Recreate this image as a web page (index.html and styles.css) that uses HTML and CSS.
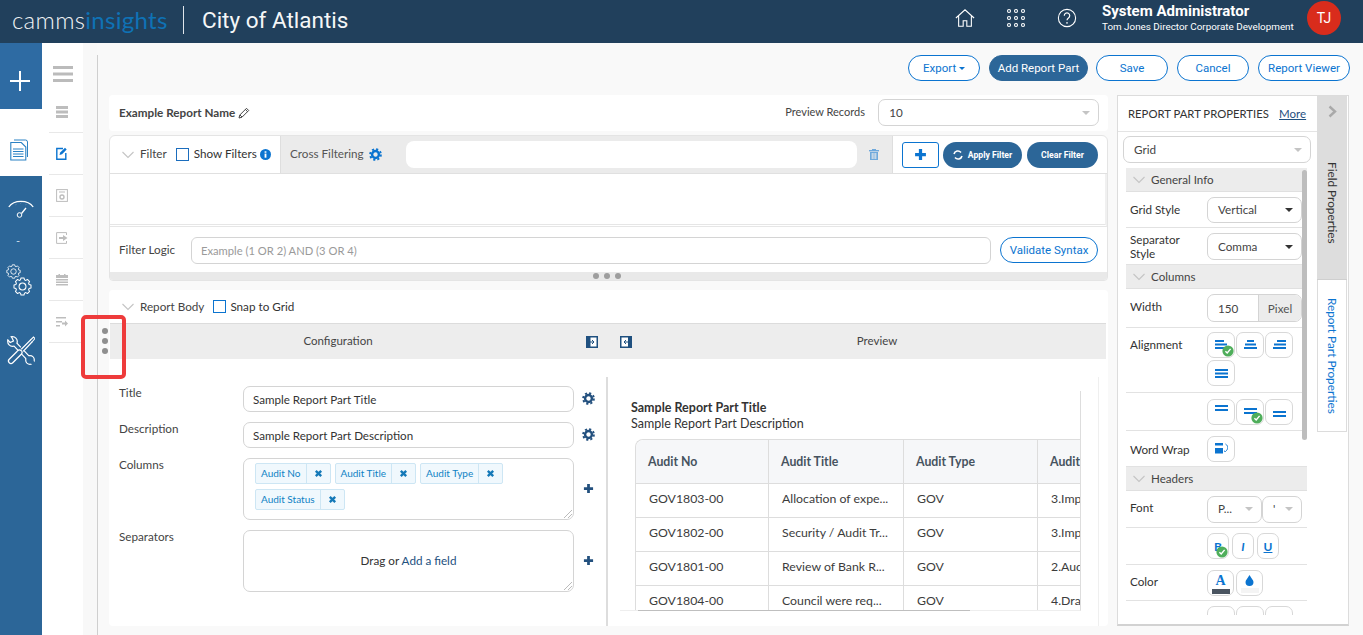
FILE: index.html
```html
<!DOCTYPE html>
<html lang="en">
<head>
<meta charset="utf-8">
<title>City of Atlantis</title>
<link rel="stylesheet" href="styles.css">
</head>
<body>
<svg class="defs" width="0" height="0" aria-hidden="true">
  <symbol id="gear" viewBox="0 0 16 16">
    <circle cx="8" cy="8" r="4.2" fill="none" stroke="currentColor" stroke-width="3"/>
    <circle cx="8" cy="8" r="6.6" fill="none" stroke="currentColor" stroke-width="2.4" stroke-dasharray="2.6 2.58"/>
  </symbol>
  <symbol id="cog-line" viewBox="-11 -11 22 22">
    <polygon points="7.65,-2.34 9.85,-1.74 9.85,1.74 7.65,2.34 7.06,3.76 8.19,5.74 5.74,8.19 3.76,7.06 2.34,7.65 1.74,9.85 -1.74,9.85 -2.34,7.65 -3.76,7.06 -5.74,8.19 -8.19,5.74 -7.06,3.76 -7.65,2.34 -9.85,1.74 -9.85,-1.74 -7.65,-2.34 -7.06,-3.76 -8.19,-5.74 -5.74,-8.19 -3.76,-7.06 -2.34,-7.65 -1.74,-9.85 1.74,-9.85 2.34,-7.65 3.76,-7.06 5.74,-8.19 8.19,-5.74 7.06,-3.76" fill="none" stroke="#fff" stroke-width="1.2" stroke-linejoin="round"/>
    <circle r="4" fill="none" stroke="#fff" stroke-width="1.2"/>
  </symbol>
  <symbol id="chev" viewBox="0 0 12 8">
    <path d="M.5 1 6 6.5 11.5 1" fill="none" stroke="#c4c4c4" stroke-width="1.1"/>
  </symbol>
  <symbol id="plus" viewBox="0 0 12 12">
    <path d="M6 1v10M1 6h10" fill="none" stroke="currentColor" stroke-width="3"/>
  </symbol>
  <symbol id="x" viewBox="0 0 10 10">
    <path d="M2 2l6 6M8 2l-6 6" fill="none" stroke="currentColor" stroke-width="2.6"/>
  </symbol>
  <symbol id="check" viewBox="0 0 12 12">
    <circle cx="6" cy="6" r="5.6" fill="#4fae5b"/>
    <path d="M3.4 6.2 5.2 8 8.6 3.9" fill="none" stroke="#fff" stroke-width="1.4"/>
  </symbol>
  <symbol id="bars3" viewBox="0 0 13 9" >
    <rect width="13" height="2"/><rect y="3.5" width="13" height="2"/><rect y="7" width="13" height="2"/>
  </symbol>
  <symbol id="bars2" viewBox="0 0 13 6">
    <rect width="13" height="2"/><rect y="4" width="13" height="2"/>
  </symbol>
</svg>

<header class="topbar">
  <div class="brand"><span class="brand-a">camms</span><span class="brand-b">insights</span></div>
  <div class="client">City of Atlantis</div>
  <nav class="top-icons">
    <svg class="ti" viewBox="0 0 22 22"><path d="M1 11 11 2l10 9M4 9v11h5v-6h4v6h5V9" fill="none" stroke="#fff" stroke-width="1.2"/></svg>
    <svg class="ti" viewBox="0 0 20 20" fill="none" stroke="#fff" stroke-width="1.1"><circle cx="3" cy="3" r="1.5"/><circle cx="10" cy="3" r="1.5"/><circle cx="17" cy="3" r="1.5"/><circle cx="3" cy="10" r="1.5"/><circle cx="10" cy="10" r="1.5"/><circle cx="17" cy="10" r="1.5"/><circle cx="3" cy="17" r="1.5"/><circle cx="10" cy="17" r="1.5"/><circle cx="17" cy="17" r="1.5"/></svg>
    <svg class="ti" viewBox="0 0 22 22"><circle cx="11" cy="11" r="9.5" fill="none" stroke="#fff" stroke-width="1.2"/><path d="M8 8.5a3 3 0 1 1 4.6 2.5c-1 .7-1.6 1.2-1.6 2.6" fill="none" stroke="#fff" stroke-width="1.3"/><circle cx="11" cy="16.4" r=".9" fill="#fff"/></svg>
  </nav>
  <div class="user">
    <div class="user-name">System Administrator</div>
    <div class="user-role">Tom Jones Director Corporate Development</div>
  </div>
  <div class="avatar">TJ</div>
</header>

<div class="shell">
  <aside class="rail">
    <div class="rail-add"><svg width="20" height="20" viewBox="0 0 20 20"><path d="M10 0v20M0 10h20" stroke="#fff" stroke-width="2"/></svg></div>
    <div class="rail-doc">
      <svg width="18" height="22" viewBox="0 0 18 22" fill="none" stroke="#2b82c4"><path d="M4 1h11.5a2 2 0 0 1 2 2v15" stroke-width="1"/><path d="M.8 3.5h10.5l4.5 4.5v13H.8z" fill="#fff" stroke-width="1.1"/><path d="M3 10h10.5M3 12.5h10.5M3 15h10.5M3 17.5h10.5" stroke-width="1.2"/></svg>
    </div>
    <div class="rail-rest">
      <svg class="rg1" width="26" height="20" viewBox="0 0 26 20" fill="none" stroke="#fff"><path d="M.8 9C6 1.500 20 1.500 25.200 9" stroke-width="1.300"/><path d="M18 10 13.500 15.500" stroke-width="1.300"/><circle cx="11.500" cy="17" r="2.300" stroke-width="1"/><path d="M8 6.500l.1.1M13 5l.1.1M18 6.500l.1.1" stroke-width="1.500"/></svg>
      <span class="rail-dash">-</span>
      <div class="rg2">
        <svg class="cog-a" width="15" height="15"><use href="#cog-line"/></svg>
        <svg class="cog-b" width="19" height="19"><use href="#cog-line"/></svg>
      </div>
      <svg class="rg3" width="28" height="29" viewBox="0 0 28 29" fill="none" stroke-linecap="round">
        <path d="M6 6 23 24" stroke="#fff" stroke-width="5.400"/>
        <circle cx="5.500" cy="5.500" r="4.800" fill="#2c6698" stroke="#fff" stroke-width="1.200"/>
        <circle cx="23" cy="24" r="4.300" fill="#2c6698" stroke="#fff" stroke-width="1.200"/>
        <path d="M6 6 23 24" stroke="#2c6698" stroke-width="3"/>
        <path d="M5 5 1.500 1.500" stroke="#2c6698" stroke-width="3.600" stroke-linecap="butt"/>
        <path d="M4.500 .8 6.500 5 3.200 6.500 .8 4" stroke="#fff" stroke-width="1.200"/>
        <path d="M23.500 24.500 27.500 28.500" stroke="#2c6698" stroke-width="3.400" stroke-linecap="butt"/>
        <path d="M15 13.500 24 4.500" stroke="#2c6698" stroke-width="4.600" stroke-linecap="butt"/>
        <path d="M14.500 13 23.500 4M16.500 15 25 6" stroke="#fff" stroke-width="1.100"/>
        <path d="M23.500 4 26.500 1 28 2.500 25 6" stroke="#fff" stroke-width="1.100"/>
        <path d="M4 25 12.500 16.500" stroke="#fff" stroke-width="6.200"/>
        <path d="M4 25 12.500 16.500" stroke="#2c6698" stroke-width="3.800"/>
      </svg>
    </div>
  </aside>

  <aside class="tools">
    <div class="tool tool-menu"><svg width="20" height="16" viewBox="0 0 20 16" fill="#bbb"><rect width="20" height="3"/><rect width="20" height="3" y="6.500"/><rect width="20" height="3" y="13"/></svg></div>
    <div class="tool"><svg width="12" height="12" viewBox="0 0 12 12" fill="#bdbdbd"><rect width="12" height="3"/><rect width="12" height="3" y="4.500"/><rect width="12" height="3" y="9"/></svg></div>
    <div class="tool"><svg width="11" height="13" viewBox="0 0 11 13" fill="none"><path d="M7 1.500H.8v10.700h9V6" stroke="#0b74d0" stroke-width="1.400"/><path d="M3.500 8 4.200 5.500 9 .8l1.700 1.700L6 7.300z" fill="#0b74d0"/></svg></div>
    <div class="tool"><svg width="12" height="13" viewBox="0 0 12 13" fill="none" stroke="#bdbdbd"><rect x=".6" y=".6" width="10.800" height="11.800"/><path d="M3 3h6"/><circle cx="6" cy="8" r="2" stroke-width="1.400"/></svg></div>
    <div class="tool"><svg width="12" height="12" viewBox="0 0 12 12" fill="none" stroke="#bdbdbd"><path d="M10.500 3V.6H.6v10.800h9.900V9"/><path d="M3 6h4" stroke-width="2"/><path d="M7 3l4.500 3L7 9z" fill="#bdbdbd" stroke="none"/></svg></div>
    <div class="tool"><svg width="12" height="12" viewBox="0 0 12 12" fill="#bdbdbd"><rect y="1" width="12" height="3"/><rect y="5" width="12" height="1.500"/><rect y="7.500" width="12" height="1.500"/><rect y="10" width="12" height="1.500"/><rect x="2.500" width="1.500" height="2"/><rect x="8" width="1.500" height="2"/></svg></div>
    <div class="tool"><svg width="12" height="10" viewBox="0 0 12 10" fill="#bdbdbd"><rect width="10" height="1.500"/><rect y="4" width="6" height="1.500"/><rect y="8" width="4" height="1.500"/><path d="M6 5.500h3v-2l3 3-3 3v-2H6z"/></svg></div>
  </aside>

  <div class="gutter"></div>

  <main class="main">
    <div class="actions">
      <button class="btn sm-e">Export <i class="caret-b"></i></button>
      <button class="btn solid w-add">Add Report Part</button>
      <button class="btn w-s w-tight">Save</button>
      <button class="btn w-s">Cancel</button>
      <button class="btn w-v">Report Viewer</button>
    </div>

    <div class="columns">
      <section class="left">
        <div class="name-row">
          <span class="report-name">Example Report Name</span>
          <svg class="pencil" width="12" height="12" viewBox="0 0 12 12" fill="none" stroke="#444"><path d="M1 11l.8-3L8.500 1.300l2.200 2.200L4 10.200z"/><path d="M7.400 2.500l2.200 2.200M2 8l2 2"/></svg>
          <span class="records-label">Preview Records</span>
          <div class="select s-records"><span>10</span><i class="caret-g"></i></div>
        </div>

        <div class="filter">
          <div class="filter-head">
            <div class="fh-a">
              <svg class="chev" width="12" height="8"><use href="#chev"/></svg>
              <span class="t-filter lift">Filter</span>
              <span class="check"></span>
              <span class="t-show lift">Show Filters</span>
              <svg class="info" width="11" height="11" viewBox="0 0 12 12"><circle cx="6" cy="6" r="6" fill="#0b74d0"/><rect x="5" y="5" width="2" height="4.500" fill="#fff"/><rect x="5" y="2.500" width="2" height="1.600" fill="#fff"/></svg>
            </div>
            <div class="fh-b">
              <span class="t-cross lift">Cross Filtering</span>
              <svg class="gear-blue" width="13" height="13"><use href="#gear"/></svg>
              <div class="cross-input"></div>
              <svg class="trash" width="10" height="11" viewBox="0 0 10 11" fill="#6fa9dc"><rect y="1" width="10" height="1.400"/><rect x="3" width="4" height="1.400"/><path d="M1 3h8v8H1zM2.700 4v6h1V4zm1.800 0v6h1V4zm1.800 0v6h1V4z" fill-rule="evenodd"/></svg>
            </div>
            <div class="fh-c">
              <button class="add-square"><svg width="13" height="13"><use href="#plus"/></svg></button>
              <button class="pill-mini p-apply"><svg width="10" height="10" viewBox="0 0 10 10" fill="none" stroke="#fff" stroke-width="1.600"><path d="M1 4a4 4 0 0 1 7-1.500M9 6a4 4 0 0 1-7 1.500"/></svg>Apply Filter</button>
              <button class="pill-mini p-clear">Clear Filter</button>
            </div>
          </div>
          <div class="filter-body"></div>
          <div class="filter-logic">
            <span class="t-logic">Filter Logic</span>
            <div class="logic-input">Example (1 OR 2) AND (3 OR 4)</div>
            <button class="btn w-validate">Validate Syntax</button>
          </div>
          <div class="filter-foot"><b></b><b></b><b></b></div>
        </div>

        <div class="report-body">
          <div class="rb-head">
            <svg class="chev" width="12" height="8"><use href="#chev"/></svg>
            <span class="t-filter rb-t">Report Body</span>
            <span class="check check-snap"></span>
            <span class="t-show rb-t">Snap to Grid</span>
          </div>
          <div class="rb-band">
            <div class="band-a"><span>Configuration</span>
              <svg width="12" height="12" viewBox="0 0 12 12"><rect width="12" height="12" fill="#1f507f"/><rect x="4.500" y="1.500" width="6" height="9" fill="#fff"/><path d="M3 6h5M6 4l2 2-2 2" fill="none" stroke="#1f507f"/></svg>
            </div>
            <div class="band-b">
              <svg width="12" height="12" viewBox="0 0 12 12"><rect width="12" height="12" fill="#1f507f"/><rect x="1.500" y="1.500" width="6.500" height="9" fill="#fff"/><path d="M9 6H4M6 4 4 6l2 2" fill="none" stroke="#1f507f"/></svg>
              <span>Preview</span>
            </div>
          </div>
          <div class="rb-main">
            <div class="config">
              <label class="c-label">Title</label>
              <div class="c-input">Sample Report Part Title</div>
              <svg class="c-ic" width="13" height="13"><use href="#gear"/></svg>

              <label class="c-label">Description</label>
              <div class="c-input">Sample Report Part Description</div>
              <svg class="c-ic" width="13" height="13"><use href="#gear"/></svg>

              <label class="c-label">Columns</label>
              <div class="c-area tags">
                <span class="tag"><span class="tag-t">Audit No</span><span class="tag-x"><svg width="9" height="9"><use href="#x"/></svg></span></span>
                <span class="tag"><span class="tag-t">Audit Title</span><span class="tag-x"><svg width="9" height="9"><use href="#x"/></svg></span></span>
                <span class="tag"><span class="tag-t">Audit Type</span><span class="tag-x"><svg width="9" height="9"><use href="#x"/></svg></span></span>
                <span class="tag"><span class="tag-t">Audit Status</span><span class="tag-x"><svg width="9" height="9"><use href="#x"/></svg></span></span>
                <i class="resize"></i>
              </div>
              <svg class="c-ic c-plus" width="11" height="11"><use href="#plus"/></svg>

              <label class="c-label">Separators</label>
              <div class="c-area drop"><span class="drop-t">Drag or&nbsp;<a>Add a field</a></span><i class="resize"></i></div>
              <svg class="c-ic c-plus" width="11" height="11"><use href="#plus"/></svg>
            </div>
            <div class="preview">
              <div class="preview-clip">
                <div class="p-title">Sample Report Part Title</div>
                <div class="p-desc">Sample Report Part Description</div>
                <table class="grid">
                  <thead><tr><th>Audit No</th><th>Audit Title</th><th>Audit Type</th><th>Audit Status</th></tr></thead>
                  <tbody>
                    <tr><td>GOV1803-00</td><td>Allocation of expe...</td><td>GOV</td><td>3.Implem...</td></tr>
                    <tr><td>GOV1802-00</td><td>Security / Audit Tr...</td><td>GOV</td><td>3.Implem...</td></tr>
                    <tr><td>GOV1801-00</td><td>Review of Bank R...</td><td>GOV</td><td>2.Audit F...</td></tr>
                    <tr><td>GOV1804-00</td><td>Council were req...</td><td>GOV</td><td>4.Draft R...</td></tr>
                  </tbody>
                </table>
              </div>
              <div class="hbar"><span></span></div>
            </div>
          </div>
        </div>
      </section>

      <aside class="props">
        <div class="props-main">
          <div class="props-head"><span>REPORT PART PROPERTIES</span><a>More</a></div>
          <div class="select s-grid"><span>Grid</span><i class="caret-g"></i></div>
          <div class="props-scroll">
            <div class="band"><svg class="chev" width="12" height="8"><use href="#chev"/></svg>General Info</div>
            <div class="prow h36"><span class="lbl">Grid Style</span><div class="ctl"><span>Vertical</span><i class="caret-d"></i></div></div>
            <div class="prow h37 nudge"><span class="lbl">Separator Style</span><div class="ctl ctl-27"><span>Comma</span><i class="caret-d"></i></div></div>
            <div class="band"><svg class="chev" width="12" height="8"><use href="#chev"/></svg>Columns</div>
            <div class="prow h39"><span class="lbl-up2">Width</span><div class="ctl ctl-w"><span>150</span><em>Pixel</em></div></div>
            <div class="prow top h65"><span>Alignment</span>
              <div class="ibtns">
                <button class="ib"><svg class="ic-up" width="12" height="9" viewBox="0 0 12 9" fill="#0b74d0"><rect width="9" height="2"/><rect y="3.500" width="12" height="2"/><rect y="7" width="10" height="2"/></svg><svg class="ok" width="12" height="12"><use href="#check"/></svg></button>
                <button class="ib"><svg class="ic-up" width="13" height="9" viewBox="0 0 13 9" fill="#0b74d0"><rect x="3" width="7" height="2"/><rect x="1" y="3.500" width="11" height="2"/><rect y="7" width="13" height="2"/></svg></button>
                <button class="ib"><svg class="ic-up" width="13" height="9" viewBox="0 0 13 9" fill="#0b74d0"><rect x="4" width="9" height="2"/><rect x="1" y="3.500" width="12" height="2"/><rect y="7" width="13" height="2"/></svg></button>
                <button class="ib"><svg width="13" height="9" fill="#0b74d0"><use href="#bars3"/></svg></button>
              </div>
            </div>
            <div class="prow h38"><span></span>
              <div class="ibtns">
                <button class="ib"><svg class="up4" width="13" height="6" fill="#0b74d0"><use href="#bars2"/></svg></button>
                <button class="ib"><svg class="up2" width="13" height="6" fill="#0b74d0"><use href="#bars2"/></svg><svg class="ok" width="12" height="12"><use href="#check"/></svg></button>
                <button class="ib"><svg class="dn4" width="13" height="6" fill="#0b74d0"><use href="#bars2"/></svg></button>
              </div>
            </div>
            <div class="prow h36"><span>Word Wrap</span>
              <div class="ibtns"><button class="ib"><svg width="13" height="11" viewBox="0 0 13 11"><rect width="8" height="2.500" fill="#0b74d0"/><rect y="5" width="8" height="5.500" fill="#0b74d0"/><path d="M10.500 1c3 2 3 5 0 7.500L9 8" fill="none" stroke="#0b74d0"/></svg></button></div>
            </div>
            <div class="band"><svg class="chev" width="12" height="8"><use href="#chev"/></svg>Headers</div>
            <div class="prow h37"><span class="lbl-up2">Font</span>
              <div class="fontpair">
                <div class="ctl c-f1"><span>P...</span><i class="caret-g"></i></div>
                <div class="ctl c-f2"><span>'</span><i class="caret-g"></i></div>
              </div>
            </div>
            <div class="prow h37"><span></span>
              <div class="ibtns">
                <button class="ib ib-s t"><b>B</b><svg class="ok" width="12" height="12"><use href="#check"/></svg></button>
                <button class="ib ib-s t"><i>I</i></button>
                <button class="ib ib-s t"><u>U</u></button>
              </div>
            </div>
            <div class="prow h36"><span class="lbl-up">Color</span>
              <div class="ibtns">
                <button class="ib ib-c"><span class="a-col">A</span><span class="swatch dark"></span></button>
                <button class="ib ib-c"><svg width="9" height="11" viewBox="0 0 9 11"><path d="M4.500 0C3 3 .5 5 .5 7a4 4 0 0 0 8 0c0-2-2.500-4-4-7z" fill="#0b74d0"/></svg><span class="swatch light"></span></button>
              </div>
            </div>
            <div class="prow h36"><span></span>
              <div class="ibtns">
                <button class="ib"></button><button class="ib"></button><button class="ib"></button>
              </div>
            </div>
            <span class="vbar"></span>
          </div>
        </div>
        <div class="props-tabs">
          <div class="tab-a">
            <svg class="tab-chev" width="9" height="13" viewBox="0 0 9 13"><path d="M1.500 1.500 7 6.500l-5.500 5" fill="none" stroke="#a9a9a9" stroke-width="2.400"/></svg>
            <span class="v-text">Field Properties</span>
          </div>
          <div class="tab-b"><span class="v-text blue">Report Part Properties</span></div>
        </div>
      </aside>
    </div>
  </main>
</div>

<div class="callout"></div>
</body>
</html>
```

FILE: styles.css
```css
* { box-sizing: border-box; }
html, body { margin: 0; padding: 0; }
body {
  width: 1363px; height: 635px; overflow: hidden; position: relative;
  background: #f9f9f9; color: #333;
  font-family: Lato, "Open Sans", sans-serif; font-size: 13px;
}
.defs { position: absolute; }
button { font-family: inherit; padding: 0; cursor: pointer; }
svg { display: block; flex: none; }

/* header */
.topbar { height: 43px; background: #21405c; display: flex; align-items: center; color: #fff; }
.brand { width: 184px; padding-left: 12px; font-size: 24px; line-height: 34px; letter-spacing: .3px; position: relative; white-space: nowrap; margin-bottom: 3px; }
.brand-a { font-weight: 300; color: #f1f4f6; }
.brand-b { font-weight: 400; color: #0f72b5; }
.brand::after { content: ""; position: absolute; right: 0; top: 3px; height: 28px; width: 1px; background: #dfe5ea; }
.client { font: 400 22.5px/30px Roboto, sans-serif; margin: 0 0 3px 18px; width: 146px; white-space: nowrap; color: #f5f7f8; }
.top-icons { margin: 0 0 7px 607px; display: flex; align-items: center; gap: 31px; width: 147px; }
.ti { width: 20px; height: 20px; }
.user { width: 205px; font-family: Roboto, sans-serif; margin-bottom: 8px; }
.user-name { font-weight: 700; font-size: 15px; line-height: 17px; white-space: nowrap; }
.user-role { font-size: 9.85px; line-height: 13px; white-space: nowrap; }
.avatar { width: 34px; height: 34px; border-radius: 50%; background: #d92c1c; font: 400 14px/34px Roboto, sans-serif; text-align: center; margin-top: -7px; }

/* shell */
.shell { display: flex; height: 592px; }
.rail { width: 42px; display: flex; flex-direction: column; background: #2c6698; }
.rail-add { height: 66px; background: #2e6ba3; display: flex; align-items: center; justify-content: center; padding: 9px 3px 0 0; }
.rail-doc { height: 67px; background: #fff; display: flex; align-items: center; justify-content: center; padding: 14px 4px 0 0; }
.rail-rest { flex: 1; display: flex; flex-direction: column; align-items: center; padding-top: 22px; color: #fff; }
.rail-dash { margin-top: 16px; font-size: 11px; line-height: 14px; color: #cfdfec; margin-right: 6px; }
.rg2 { margin-top: 16px; width: 30px; height: 34px; }
.cog-b { margin: -2px 0 0 7px; }
.rg3 { margin-top: 38px; }

.tools { width: 41px; background: #fff; padding-left: 7px; }
.tool { height: 42px; display: flex; align-items: center; padding-left: 7px; border-bottom: 1px solid #e8e8e8; }
.tool-menu { height: 48px; border: 0; padding: 14px 0 0 4px; }

.gutter { width: 14px; background: #f8f8f8; }
.main { flex: 1; margin-top: 12px; border-left: 1px solid #cfcfcf; padding: 0 13px 0 11px; min-width: 0; }

/* action buttons */
.actions { height: 26px; display: flex; justify-content: flex-end; gap: 9px; margin-bottom: 14px; }
.btn {
  height: 26px; border-radius: 13px; border: 1px solid #0b74d0; background: #fff; color: #0b74d0;
  font: 400 11.5px/24px Roboto, sans-serif; white-space: nowrap; text-align: center;
}
.btn.solid { background: #2c6698; border-color: #2c6698; color: #fff; }
.sm-e { width: 72px; }
.w-add { width: 99px; }
.w-s { width: 72px; }
.w-tight { margin-left: -1px; }
.w-v { width: 92px; }
.w-validate { width: 98px; font-size: 11.5px; }
.caret-b { display: inline-block; vertical-align: 2px; border: 3px solid transparent; border-top-color: #0b74d0; border-bottom: 0; }
.caret-g { border: 4px solid transparent; border-top: 4px solid #c4c4c4; border-bottom: 0; }
.caret-d { border: 4px solid transparent; border-top: 4px solid #333; border-bottom: 0; }

.columns { display: flex; gap: 9px; align-items: flex-start; }
.left { width: 999px; }

/* report name */
.name-row { height: 36px; background: #fff; display: flex; align-items: center; padding: 0 0 1px 10px; margin-bottom: 4px; border-radius: 4px; }
.report-name { font-weight: 700; font-size: 11.7px; color: #444; white-space: nowrap; margin-bottom: 2px; }
.pencil { margin-left: 3px; }
.records-label { margin: 0 0 2px 535px; font-size: 11px; white-space: nowrap; color: #444; width: 93px; }
.select {
  display: flex; align-items: center; justify-content: space-between; background: #fff;
  border: 1px solid #d4d4d4; border-radius: 7px; padding: 0 8px 0 10px; font-size: 11.7px; color: #444;
}
.select span { margin-bottom: 2px; }
.s-records { width: 221px; height: 27px; }

/* filter */
.filter { height: 146px; border: 1px solid #e4e4e4; border-radius: 6px 6px 4px 4px; background: #fff; margin-bottom: 9px; overflow: hidden; display: flex; flex-direction: column; }
.filter-head { height: 38px; flex: none; display: flex; border-bottom: 1px solid #e0e0e0; }
.fh-a { width: 171px; display: flex; align-items: center; padding-left: 12px; border-right: 1px solid #dedede; }
.chev { margin-right: 6px; }
.lift { margin-bottom: 3px; }
.rb-t { margin-bottom: 1px; }
.t-filter { font-size: 11.7px; color: #444; white-space: nowrap; }
.check { width: 13px; height: 13px; border: 1px solid #1b6dbd; margin: 0 5px 0 9px; flex: none; background: #fff; }
.t-show { font-size: 11.7px; color: #333; white-space: nowrap; }
.info { margin-left: 3px; }
.fh-b { width: 612px; background: #ebebeb; display: flex; align-items: center; padding-left: 9px; border-right: 1px solid #dedede; }
.t-cross { font-size: 11.7px; color: #555; white-space: nowrap; width: 79px; }
.gear-blue { color: #0b74d0; }
.cross-input { width: 451px; height: 27px; border-radius: 8px; background: #fff; margin-left: 24px; }
.trash { margin-left: 12px; }
.fh-c { flex: 1; display: flex; align-items: center; padding-left: 9px; gap: 4px; }
.add-square { width: 37px; height: 26px; border: 1px solid #0b74d0; border-radius: 3px; background: #fff; color: #0b74d0; display: flex; align-items: center; justify-content: center; }
.pill-mini { height: 26px; border: 0; border-radius: 13px; background: #2c6698; color: #fff; font: 700 8.7px/26px Roboto, sans-serif; display: flex; align-items: center; justify-content: center; white-space: nowrap; }
.p-apply { width: 79px; gap: 5px; }
.p-clear { width: 71px; margin-left: 1px; }
.filter-body { height: 53px; flex: none; border-bottom: 3px double #e6e6e6; border-right: 2px solid #f0f0f0; }
.filter-logic { height: 45px; flex: none; display: flex; align-items: center; padding: 1px 0 0 9px; }
.t-logic { font-size: 11.7px; color: #444; width: 72px; margin-bottom: 3px; }
.logic-input { width: 800px; height: 27px; border: 1px solid #d4d4d4; border-radius: 6px; padding-left: 9px; font-size: 11.2px; line-height: 25px; color: #9a9a9a; margin-right: 9px; }
.filter-foot { flex: 1; background: #e9e9e9; display: flex; justify-content: center; align-items: center; gap: 5px; padding-right: 3px; }
.filter-foot b { width: 6px; height: 6px; border-radius: 50%; background: #9e9e9e; }

/* report body */
.report-body { height: 336px; background: #fff; border-radius: 4px; }
.rb-head { height: 33px; display: flex; align-items: center; padding-left: 13px; }
.check-snap { margin: 0 4px 0 9px; border-color: #0b74d0; }
.rb-band { height: 36px; margin: 0 2px 0 1px; background: #ededed; border-top: 1px solid #dcdcdc; display: flex; font-size: 11.5px; color: #444; }
.band-a { width: 497px; display: flex; align-items: center; padding-right: 9px; }
.band-a span { flex: 1; text-align: center; padding-right: 20px; margin-bottom: 3px; }
.band-b { flex: 1; display: flex; align-items: center; padding-left: 13px; }
.band-b span { flex: 1; text-align: center; padding-left: 16px; margin-bottom: 3px; }
.rb-main { display: flex; height: 267px; }
.config {
  width: 497px; padding: 27px 0 0 10px;
  display: grid; grid-template-columns: 124px 331px 32px; grid-auto-rows: min-content; row-gap: 10px;
  align-content: start;
}
.c-label { font-size: 11.7px; color: #444; line-height: 14px; margin-top: -1px; }
.c-input { height: 26px; border: 1px solid #d4d4d4; border-radius: 7px; font-size: 11.6px; line-height: 25px; padding-left: 9px; color: #333; }
.c-ic { color: #23507e; margin: 6px 0 0 8px; }
.c-plus { margin: 25px 0 0 9px; }
.c-area { height: 62px; border: 1px solid #d4d4d4; border-radius: 7px; position: relative; }
.tags { padding: 4px 0 0 11px; display: flex; flex-wrap: wrap; gap: 5px 4px; align-content: flex-start; }
.tag { height: 21px; display: flex; background: #f0f8fd; border: 1px solid #cde6f4; border-radius: 2px; font-size: 10px; line-height: 19px; color: #0f82c4; white-space: nowrap; }
.tag-t { padding: 0 5px; border-right: 1px solid #cde6f4; }
.tag-x { width: 23px; display: flex; align-items: center; justify-content: center; color: #1579b8; }
.drop { display: flex; align-items: center; justify-content: center; font-size: 11.7px; color: #333; }
.drop-t { margin-bottom: 2px; }
.drop a { color: #23507e; }
.resize { position: absolute; right: 1px; bottom: 1px; width: 10px; height: 10px; background: repeating-linear-gradient(135deg, transparent 0 2px, #bbb 2px 3px); clip-path: polygon(100% 0, 100% 100%, 0 100%); }

.preview { flex: 1; margin-top: 18px; border-left: 2px solid #dddddd; height: 249px; padding: 14px 0 0 12px; border-right: 1px solid #efefef; margin-right: 9px; }
.preview-clip { width: 461px; height: 220px; overflow: hidden; padding: 9px 0 0 11px; border-right: 1px solid #ddd; border-bottom: 1px solid #eee; }
.p-title { font-weight: 700; font-size: 12.5px; line-height: 16px; color: #333; white-space: nowrap; }
.p-desc { font-size: 12.5px; line-height: 16px; color: #333; white-space: nowrap; }
.grid { margin: 7px 0 0 4px; width: 540px; border-collapse: separate; border-spacing: 0; table-layout: fixed; font-size: 12.3px; color: #3c3c3c; border-top: 1px solid #ddd; border-left: 1px solid #ddd; border-top-left-radius: 8px; }
.grid th, .grid td { text-align: left; white-space: nowrap; overflow: hidden; border-right: 1px solid #ddd; border-bottom: 1px solid #ddd; padding: 0 0 0 12px; }
.grid th { height: 44px; background: #f6f7f9; font-weight: 700; color: #465360; }
.grid th:first-child { border-top-left-radius: 8px; }
.grid td { height: 34px; padding: 0 0 4px 13px; }
.grid th:nth-child(1) { width: 133px; }
.grid th:nth-child(2) { width: 135px; }
.grid th:nth-child(3) { width: 134px; }
.hbar { width: 461px; height: 1px; margin-top: -1px; }
.hbar span { display: block; width: 332px; height: 1px; margin-left: 18px; background: #bfbfbf; }

/* properties */
.props { width: 232px; height: 531px; border: 1px solid #dcdcdc; border-bottom: 2px solid #d2d2d2; background: #fff; display: flex; padding-right: 1px; }
.props-main { width: 200px; display: flex; flex-direction: column; min-width: 0; }
.props-head { height: 36px; flex: none; display: flex; align-items: center; padding: 0 11px 0 10px; font-size: 11.3px; color: #333; justify-content: space-between; border-bottom: 1px solid #e4e4e4; }
.props-head a { color: #1f507f; text-decoration: underline; font-size: 11.5px; }
.s-grid { width: 188px; height: 27px; margin: 4px 0 5px 5px; flex: none; }
.props-scroll { width: 181px; height: 447px; margin-left: 8px; overflow: hidden; position: relative; }
.band { height: 24px; background: #ececec; display: flex; align-items: center; padding-left: 7px; font-size: 11.6px; color: #444; border-bottom: 1px solid #e0e0e0; }
.band .chev { margin-right: 6px; }
.prow { display: flex; padding-left: 4px; align-items: center; border-bottom: 1px solid #e2e2e2; font-size: 11.7px; line-height: 14px; color: #333; }
.prow > span { width: 77px; flex: none; }
.prow.top { align-items: flex-start; padding-top: 4px; }
.prow.top > span { padding-top: 5px; }
.prow.nudge { padding-top: 1px; }
.lbl { margin-bottom: 2px; }
.lbl-up { margin-bottom: 3px; }
.lbl-up2 { margin-bottom: 5px; }
.h36 { height: 36px; } .h37 { height: 37px; } .h38 { height: 38px; } .h39 { height: 39px; } .h65 { height: 65px; }
.ctl { width: 95px; height: 26px; border: 1px solid #d4d4d4; border-radius: 7px; display: flex; align-items: center; justify-content: space-between; padding: 0 8px 0 10px; font-size: 11.7px; color: #444; }
.ctl > span { margin-bottom: 2px; }
.ctl-w > span { margin-bottom: 0; }
.ctl-27 { height: 27px; }
.ctl-w { height: 28px; padding: 0 0 0 10px; overflow: hidden; }
.ctl-w em { width: 43px; height: 100%; background: #ececec; border-left: 1px solid #d4d4d4; font-style: normal; text-align: center; line-height: 26px; color: #555; }
.ibtns { display: flex; flex-wrap: wrap; gap: 2px 1px; width: 92px; }
.ib { width: 28px; height: 26px; border: 1px solid #d8d8d8; border-radius: 7px; background: #fff; display: flex; align-items: center; justify-content: center; position: relative; }
.ok { position: absolute; right: 0; bottom: 0; }
.ic-up { margin-top: -2px; }
.up4 { margin-top: -8px; } .up2 { margin-top: -1px; } .dn4 { margin-top: 5px; }
.fontpair { display: flex; }
.c-f1 { width: 55px; height: 27px; }
.c-f2 { width: 40px; height: 27px; }
.ib-s { width: 22px; margin-right: 2px; }
.ib-s.t { color: #0b74d0; font-size: 12px; }
.ib-s.t b, .ib-s.t i, .ib-s.t u { font-weight: 700; }
.ib-c { width: 27px; flex-direction: column; gap: 1px; padding-top: 2px; margin-right: 1px; }
.a-col { font: 700 14px/13px "Liberation Serif", serif; color: #0b74d0; }
.swatch { width: 18px; height: 5px; margin-top: 1px; }
.swatch.dark { background: #4a5460; }
.swatch.light { background: #f4f4f4; }
.vbar { position: absolute; right: 0; top: 2px; width: 5px; height: 270px; background: #bdbdbd; border-radius: 3px; }

.props-tabs { width: 30px; display: flex; flex-direction: column; }
.tab-a { height: 184px; background: #dddddd; padding-top: 9px; display: flex; flex-direction: column; align-items: center; border-bottom: 1px solid #cfcfcf; }
.tab-chev { margin-bottom: 44px; }
.tab-b { height: 152px; border: 1px solid #dcdcdc; border-top: 0; background: #fff; display: flex; justify-content: center; padding-top: 18px; }
.v-text { writing-mode: vertical-rl; font-size: 11.8px; color: #333; white-space: nowrap; }
.v-text.blue { color: #0b74d0; font-size: 11.8px; }

/* annotation overlay */
.callout { position: absolute; left: 81px; top: 315px; width: 45px; height: 64px; border: 4px solid #ee3b3b; border-radius: 5px; }
.callout::before { content: ""; position: absolute; left: 17px; top: 9px; width: 6px; height: 6px; border-radius: 50%; background: #8f8f8f; box-shadow: 0 10px 0 #8f8f8f, 0 20px 0 #8f8f8f; }
```
